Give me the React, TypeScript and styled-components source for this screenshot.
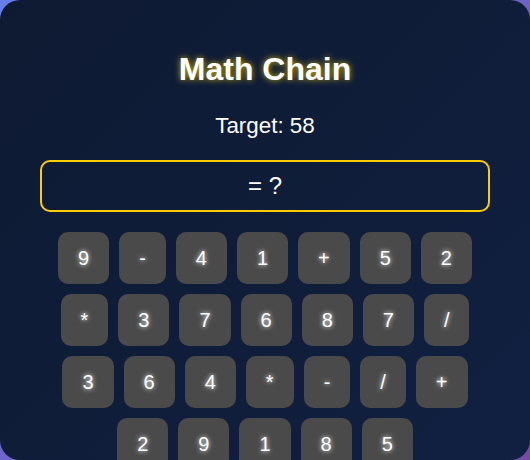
import styled, { createGlobalStyle } from "styled-components";

const GlobalStyle = createGlobalStyle`
  html, body {
    margin: 0;
    padding: 0;
    height: 100%;
    background: linear-gradient(135deg, #667eea 0%, #764ba2 100%);
    font-family: "Liberation Sans", Arial, sans-serif;
  }
`;

const tiles = [
  "9", "-", "4", "1", "+", "5", "2",
  "*", "3", "7", "6", "8", "7", "/",
  "3", "6", "4", "*", "-", "/", "+",
  "2", "9", "1", "8", "5",
];

export default function App() {
  return (
    <>
      <GlobalStyle />
      <Card>
        <Title>Math Chain</Title>
        <Target>Target: 58</Target>
        <Display>= ?</Display>
        <Grid>
          {tiles.map((t, i) => (
            <Tile key={i}>{t}</Tile>
          ))}
        </Grid>
      </Card>
    </>
  );
}

const Card = styled.main`
  display: flex;
  flex-flow: column nowrap;
  align-items: center;

  box-sizing: border-box;
  width: 530px;
  height: 460px;
  padding: 51px 40px 0;
  border-radius: 20px;
  overflow: hidden;

  background: linear-gradient(135deg, #0e1a32 0%, #112041 100%);
  color: #ffffff;

  & > * {
    flex-shrink: 0;
  }
`;

const Title = styled.h1`
  margin: 0;
  font-size: 32px;
  font-weight: bold;
  line-height: 36px;
  text-shadow: 0 0 6px rgba(255, 215, 0, 0.8);
`;

const Target = styled.p`
  margin: 26px 0 0;
  font-size: 22.4px;
  line-height: 26px;
`;

const Display = styled.div`
  box-sizing: border-box;
  width: 100%;
  height: 52px;
  margin-top: 21px;
  border: 2px solid #ffcc00;
  border-radius: 10px;

  display: flex;
  align-items: center;
  justify-content: center;
  font-size: 24px;
`;

const Grid = styled.div`
  display: flex;
  flex-flow: row wrap;
  justify-content: center;

  width: 100%;
  margin-top: 20px;
  gap: 10px;
`;

const Tile = styled.button`
  box-sizing: border-box;
  height: 52px;
  padding: 0 20px;
  border: none;
  border-radius: 10px;

  background: #4a4a4a;
  color: #ffffff;
  font-family: "Liberation Sans", Arial, sans-serif;
  font-size: 20px;
  text-shadow: 0 0 5px #ffffff;
  cursor: pointer;
`;
